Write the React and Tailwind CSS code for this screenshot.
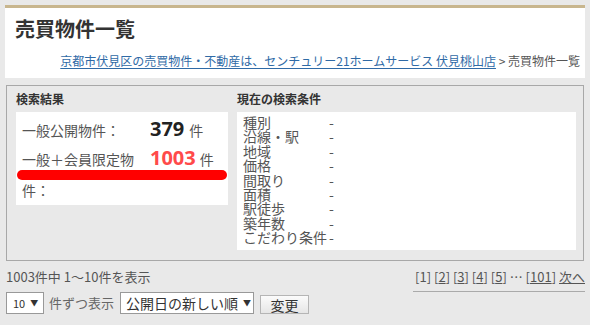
export default function App() {
  const jp = { fontFamily: '"Noto Sans CJK JP", "Noto Sans", sans-serif' };
  const num = { fontFamily: '"Open Sans", "DejaVu Sans", sans-serif' };
  const rows = ["種別", "沿線・駅", "地域", "価格", "間取り", "面積", "駅徒歩", "築年数", "こだわり条件"];
  return (
    <div className="w-[590px] h-[325px] overflow-hidden bg-[#e9e9e9] pt-[5px] pl-[5px] text-[#444]" style={jp}>
      <div className="w-[580px] border-t-[3px] border-[#c8b68e] bg-white h-[73px] pt-[7px]">
        <h1 className="pl-[10px] text-[20px] font-bold leading-[28px] text-[#333]">売買物件一覧</h1>
        <div className="mt-[10px] pr-[5px] text-right text-[12px] leading-[16px] text-[#555]">
          <a className="text-[#2f6aa6] underline underline-offset-2">京都市伏見区の売買物件・不動産は、センチュリー21ホームサービス 伏見桃山店</a>
          <span> &gt; 売買物件一覧</span>
        </div>
      </div>
      <div className="ml-[1px] mt-[7px] w-[578px] h-[176px] border border-[#a8a8a8] bg-[#e9e9e9] pl-[9px] pr-[7px] pt-[5px] flex gap-[9px]">
        <div className="w-[212px]">
          <div className="text-[12px] font-bold leading-[16px] text-[#333]">検索結果</div>
          <div className="mt-[5px] h-[93px] bg-white pt-[6px]">
            <div className="flex items-baseline pl-[6px] h-[22px]">
              <span className="w-[128px] text-[14px] text-[#555]">一般公開物件：</span>
              <span className="text-[20px] font-bold text-[#222] leading-[22px]" style={num}>379</span>
              <span className="ml-[5px] text-[14px] text-[#555]">件</span>
            </div>
            <div className="flex items-baseline pl-[6px] h-[22px] mt-[7px]">
              <span className="w-[128px] text-[14px] text-[#555]">一般＋会員限定物</span>
              <span className="text-[20px] font-bold text-[#ff4a4a] leading-[22px]" style={num}>1003</span>
              <span className="ml-[4px] text-[14px] text-[#555]">件</span>
            </div>
            <div className="mx-[1px] mt-[1px] h-[10px] rounded-full bg-[#ff0000]"></div>
            <div className="pl-[6px] text-[14px] leading-[20px] text-[#555]">件：</div>
          </div>
        </div>
        <div className="flex-1">
          <div className="text-[12px] font-bold leading-[16px] text-[#333]">現在の検索条件</div>
          <div className="mt-[5px] h-[138px] bg-white pt-[3px] pl-[6px]">
            {rows.map((r) => (
              <div key={r} className="flex text-[14px] leading-[14.4px] text-[#555]">
                <span className="w-[86px] whitespace-nowrap">{r}</span>
                <span>-</span>
              </div>
            ))}
          </div>
        </div>
      </div>
      <div className="flex items-end justify-between w-[580px] mt-[6px]">
        <div className="text-[13px] leading-[20px] text-[#555] pl-[1px] pb-[5px]">1003件中 1～10件を表示</div>
        <div className="text-[13px] leading-[20px] text-[#555] border-b border-[#aaa] pb-[4px] pl-[2px]">
          [1] [<span className="underline">2</span>] [<span className="underline">3</span>] [<span className="underline">4</span>] [<span className="underline">5</span>] … [<span className="underline">101</span>] <span className="underline">次へ</span>
        </div>
      </div>
      <div className="flex items-start pl-[1px]">
        <div className="flex items-center w-[38px] h-[22px] border border-[#999] bg-white pl-[6px] text-[11px] text-[#333]">
          10<span className="ml-[5px] text-[8px]">▼</span>
        </div>
        <div className="ml-[5px] text-[13px] leading-[22px] text-[#666]">件ずつ表示</div>
        <div className="flex items-center ml-[6px] w-[134px] h-[22px] border border-[#999] bg-white pl-[5px] text-[14px] text-[#333]">
          公開日の新しい順<span className="ml-[5px] text-[8px]">▼</span>
        </div>
        <div className="ml-[6px] mt-[3px] w-[49px] h-[19px] border border-[#b5b5b5] bg-gradient-to-b from-[#fbfbfb] to-[#e6e6e6] text-center text-[14px] leading-[18px] text-[#333]">変更</div>
      </div>
    </div>
  );
}
